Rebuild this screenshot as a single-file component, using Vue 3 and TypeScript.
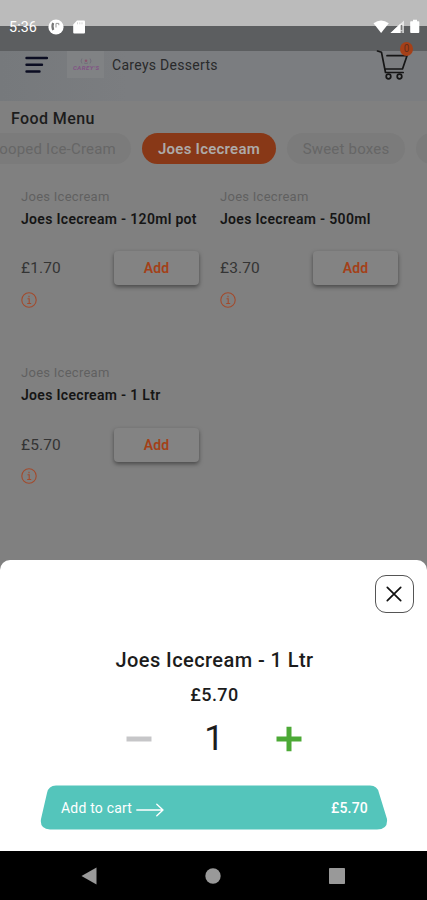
<script setup lang="ts">
import { ref, computed } from 'vue'

interface Product {
  category: string
  name: string
  price: number
}

const categories = ['Scooped Ice-Cream', 'Joes Icecream', 'Sweet boxes', '']
const activeCategory = ref('Joes Icecream')
const products: Product[] = [
  { category: 'Joes Icecream', name: 'Joes Icecream - 120ml pot', price: 1.7 },
  { category: 'Joes Icecream', name: 'Joes Icecream - 500ml', price: 3.7 },
  { category: 'Joes Icecream', name: 'Joes Icecream - 1 Ltr', price: 5.7 },
]
const selected = ref<Product>(products[2])
const quantity = ref(1)
const total = computed(() => selected.value.price * quantity.value)
const money = (value: number): string => '£' + value.toFixed(2)

function choose(product: Product): void {
  selected.value = product
  quantity.value = 1
}
</script>

<template>
  <div class="phone">
    <div class="status">
      <span class="clock">5:36</span>
      <svg class="status-app" width="16" height="16" viewBox="0 0 16 16">
        <circle cx="8" cy="8" r="7.6" fill="#fff" />
        <path d="M5.200 4q-1.500 3 0 7" fill="none" stroke="#777" stroke-width="2.200" />
        <path d="M8 8.500V4.400h2.800v1.800" fill="none" stroke="#999" stroke-width="1" />
      </svg>
      <svg class="status-sd" width="12" height="14" viewBox="0 0 12 14">
        <path d="M4 .5h7q1 0 1 1v11q0 1-1 1H1.200q-1 0-1-1V4.500z" fill="#fff" />
        <path d="M4.500 2.300v2M6.800 2.300v2M9 2.300v2" stroke="#ccc" stroke-width=".8" />
      </svg>
      <svg class="status-right" width="48" height="16" viewBox="0 0 48 16">
        <path d="M.5 4.300Q8-1.200 15.800 4.300L8.100 14z" fill="#fff" />
        <path d="M17.500 14L31 1.500V14z" fill="#fff" fill-opacity=".65" />
        <path d="M17.500 14L27.500 4.500V14z" fill="#fff" />
        <path d="M28.500 6v5M28.500 12.300v1.500" stroke="#777" stroke-width="1.400" />
        <path d="M38 2.300h2V.8h4v1.500h1.500q.8 0 .8.800V13q0 1-.8 1H38q-.8 0-.8-1V3.100q0-.8.800-.8z" fill="#fff" />
      </svg>
    </div>

    <header class="header">
      <svg class="menu" width="24" height="18" viewBox="0 0 24 18" fill="none" stroke="#0b0d22" stroke-width="2.400" stroke-linecap="round">
        <path d="M2.500 2H23M2.500 8.700H18M2.500 15.500H15.500" />
      </svg>
      <div class="brand">
        <svg width="28" height="15" viewBox="0 0 28 15">
          <path d="M10 1.500q-2 2.500 0 5M18 1.500q2 2.500 0 5M12 6q2 1 4 0" fill="none" stroke="#6c6877" stroke-width=".8" />
          <circle cx="14" cy="3.800" r="1.300" fill="#88556d" />
          <text x="14" y="12.800" text-anchor="middle" textLength="26">CAREY'S</text>
        </svg>
      </div>
      <span class="shop">Careys Desserts</span>
      <div class="cart">
        <svg width="34" height="32" viewBox="0 0 34 32" fill="none" stroke="#151515" stroke-width="1.700" stroke-linecap="round" stroke-linejoin="round">
          <path d="M1.500 2l4 1.300L9.500 23.500h17.700M11 6.700H31L26.500 20H9" />
          <circle cx="12.500" cy="27.500" r="2.300" />
          <circle cx="23.500" cy="27.500" r="2.300" />
        </svg>
        <span class="badge">0</span>
      </div>
    </header>

    <main class="content">
      <h1>Food Menu</h1>
      <nav class="tabs">
        <button
          v-for="category in categories"
          :key="category"
          class="tab"
          :class="{ active: category === activeCategory }"
          @click="activeCategory = category"
        >{{ category }}</button>
      </nav>
      <section class="grid">
        <article v-for="product in products" :key="product.name" class="product">
          <p class="kind">{{ product.category }}</p>
          <h2>{{ product.name }}</h2>
          <div class="buy">
            <span class="price">{{ money(product.price) }}</span>
            <button class="add" @click="choose(product)">Add</button>
          </div>
          <svg class="info" width="16" height="16" viewBox="0 0 16 16" fill="none" stroke="#a24a2c" stroke-width="1.100">
            <circle cx="8" cy="8" r="7.200" />
            <path d="M6.500 6.800h1.700v4.700M6.200 11.500h4M8 3.700v1.500" />
          </svg>
        </article>
      </section>
    </main>

    <div class="sheet-wrap">
      <section class="sheet">
        <button class="close" aria-label="Close">
          <svg width="16" height="16" viewBox="0 0 16 16" stroke="#111" stroke-width="1.700" stroke-linecap="round">
            <path d="M1.300 1.300l13.400 13.400M14.700 1.300L1.300 14.700" />
          </svg>
        </button>
        <h3>{{ selected.name }}</h3>
        <p class="sheet-price">{{ money(selected.price) }}</p>
        <div class="stepper">
          <button aria-label="Decrease" @click="quantity = Math.max(1, quantity - 1)">
            <svg width="26" height="26" viewBox="0 0 26 26"><path d="M.5 13h25" stroke="#c6c6c8" stroke-width="5" /></svg>
          </button>
          <span class="quantity">{{ quantity }}</span>
          <button aria-label="Increase" @click="quantity++">
            <svg width="26" height="26" viewBox="0 0 26 26"><path d="M.5 13h25M13 .7v24.600" stroke="#4ca936" stroke-width="5" /></svg>
          </button>
        </div>
        <button class="checkout">
          <svg class="checkout-shape" width="348" height="45" viewBox="0 0 348 45">
            <path d="M16 .5H330Q337.500.5 339 8L347 34Q348 44.500 337 44.500H10Q-.5 44 1 34L7 8Q8.500.5 16 .5Z" fill="#54c5bb" />
          </svg>
          <span class="checkout-row">
            <span>Add to cart</span>
            <svg class="arrow" width="28" height="14" viewBox="0 0 28 14" fill="none" stroke="#fff" stroke-width="1.400" stroke-linecap="round" stroke-linejoin="round">
              <path d="M.8 7H27M20.800 1.200L27 7l-6.200 5.800" />
            </svg>
            <span class="total">{{ money(total) }}</span>
          </span>
        </button>
      </section>
    </div>

    <footer class="navbar">
      <svg width="16" height="18" viewBox="0 0 16 18"><path d="M15.500.5v17L.5 9z" fill="#999" /></svg>
      <svg width="16" height="16" viewBox="0 0 16 16"><circle cx="8" cy="8" r="7.700" fill="#999" /></svg>
      <svg width="16" height="16" viewBox="0 0 16 16"><rect width="16" height="16" rx=".8" fill="#999" /></svg>
    </footer>
  </div>
</template>

<style>
body {
  margin: 0;
  background: #808080;
}
</style>

<style scoped>
.phone {
  width: 427px;
  height: 900px;
  display: flex;
  flex-direction: column;
  overflow: hidden;
  background: #808080;
  font-family: Roboto, sans-serif;
  color: #1c1c1c;
}
h1, h2, h3, p { margin: 0; }
button {
  border: 0;
  padding: 0;
  background: none;
  font-family: inherit;
}
svg { display: block; flex: none; }

.status {
  flex: none;
  height: 51px;
  box-sizing: border-box;
  padding: 2px 6px 0 9px;
  display: flex;
  align-items: center;
  background: linear-gradient(#bbb 0 26.500px, #5c5e60 26.500px);
  color: #fff;
}
.clock { width: 28px; font-size: 14.300px; letter-spacing: 0.100px; }
.status-app { margin-left: 11px; }
.status-sd { margin-left: 9px; }
.status-right { margin-left: auto; }

.header {
  flex: none;
  height: 50px;
  display: flex;
  background: linear-gradient(90deg, #76797c, #7b7d80 30%, #7b7d80);
}
.menu { margin: 5px 0 0 24px; }
.brand {
  width: 37px;
  height: 27px;
  margin-left: 19px;
  display: flex;
  align-items: center;
  justify-content: center;
  background: #808284;
}
.brand text {
  font: italic 700 6px Roboto, sans-serif;
  fill: #805384;
}
.shop {
  margin: 5px 0 0 8px;
  font-size: 14px;
  line-height: 18px;
  letter-spacing: 0.300px;
  color: #292a2b;
}
.cart { position: relative; margin: -2px 17px 0 auto; }
.badge {
  position: absolute;
  top: -7px;
  right: -3px;
  width: 13px;
  height: 14px;
  border-radius: 50%;
  background: #a54018;
  color: #612d1b;
  font-size: 10px;
  line-height: 14px;
  text-align: center;
}

.content { flex: none; height: 459px; }
h1 {
  padding: 9px 0 0 11px;
  font-size: 16px;
  line-height: 18px;
  font-weight: 500;
  letter-spacing: 0.400px;
}
.tabs {
  display: flex;
  justify-content: flex-start;
  gap: 11px;
  margin: 5px 0 0 -25px;
  overflow: hidden;
}
.tab {
  flex: none;
  height: 31px;
  border-radius: 16px;
  background: #7b7b7b;
  color: #666;
  font-size: 15px;
  letter-spacing: 0.200px;
}
.tab:nth-child(1) { width: 156px; padding-right: 8px; }
.tab:nth-child(2) { width: 134px; }
.tab:nth-child(3) { width: 118px; }
.tab:nth-child(4) { width: 90px; }
.tab.active { background: #883817; color: #adaaa8; font-weight: 600; letter-spacing: 0.250px; }

.grid {
  display: grid;
  grid-template-columns: 199px 199px;
  grid-auto-rows: 176.500px;
  padding: 23.500px 0 0 21px;
}
.kind {
  font-size: 13px;
  line-height: 18px;
  letter-spacing: 0.270px;
  color: #606060;
}
h2 {
  margin-top: 4px;
  font-size: 14px;
  line-height: 18px;
  font-weight: 600;
  letter-spacing: 0.310px;
  color: #151515;
  white-space: nowrap;
}
.buy { display: flex; align-items: center; margin-top: 23.500px; }
.price { width: 93px; font-size: 15.500px; letter-spacing: 0.150px; color: #343434; }
.add {
  width: 85px;
  height: 34px;
  border-radius: 4px;
  background: #838383;
  box-shadow: 0 2px 4px #484848;
  color: #a34018;
  font-size: 14px;
  font-weight: 600;
  letter-spacing: 0.200px;
}
.info { margin-top: 6.500px; }

.sheet-wrap { flex: none; height: 291px; background: #808080; }
.sheet {
  height: 291px;
  display: flex;
  flex-direction: column;
  align-items: center;
  border-radius: 10px 10px 0 0;
  background: #fff;
}
.close {
  align-self: flex-end;
  width: 39px;
  height: 38px;
  margin: 15px 13.500px 0 0;
  display: flex;
  flex: none;
  align-items: center;
  justify-content: center;
  border: 1px solid #555;
  border-radius: 11px;
}
h3 {
  margin: 35px 0 0 2px;
  font-size: 20px;
  line-height: 24px;
  font-weight: 500;
  letter-spacing: 0.420px;
}
.sheet-price {
  margin: 12px 0 0 2px;
  font-size: 18px;
  line-height: 22px;
  font-weight: 500;
  letter-spacing: 0.400px;
}
.stepper {
  width: 176px;
  margin: 12px 0 0 1px;
  display: flex;
  align-items: center;
  justify-content: space-between;
}
.quantity { font-size: 35px; line-height: 42px; font-weight: 400; }
.checkout {
  display: grid;
  width: 348px;
  height: 45px;
  margin: 25px 0 0 1px;
  color: #fff;
  font-size: 14px;
  letter-spacing: 0.200px;
}
.checkout-shape, .checkout-row { grid-area: 1 / 1; }
.checkout-row {
  display: flex;
  align-items: center;
  padding: 0 20px 0 21px;
}
.arrow { margin: 4px 0 0 4px; }
.total { margin-left: auto; font-weight: 500; }

.navbar {
  flex: 1;
  box-sizing: border-box;
  padding: 0 82px 0 81px;
  display: flex;
  align-items: center;
  justify-content: space-between;
  background: #000;
}
</style>
